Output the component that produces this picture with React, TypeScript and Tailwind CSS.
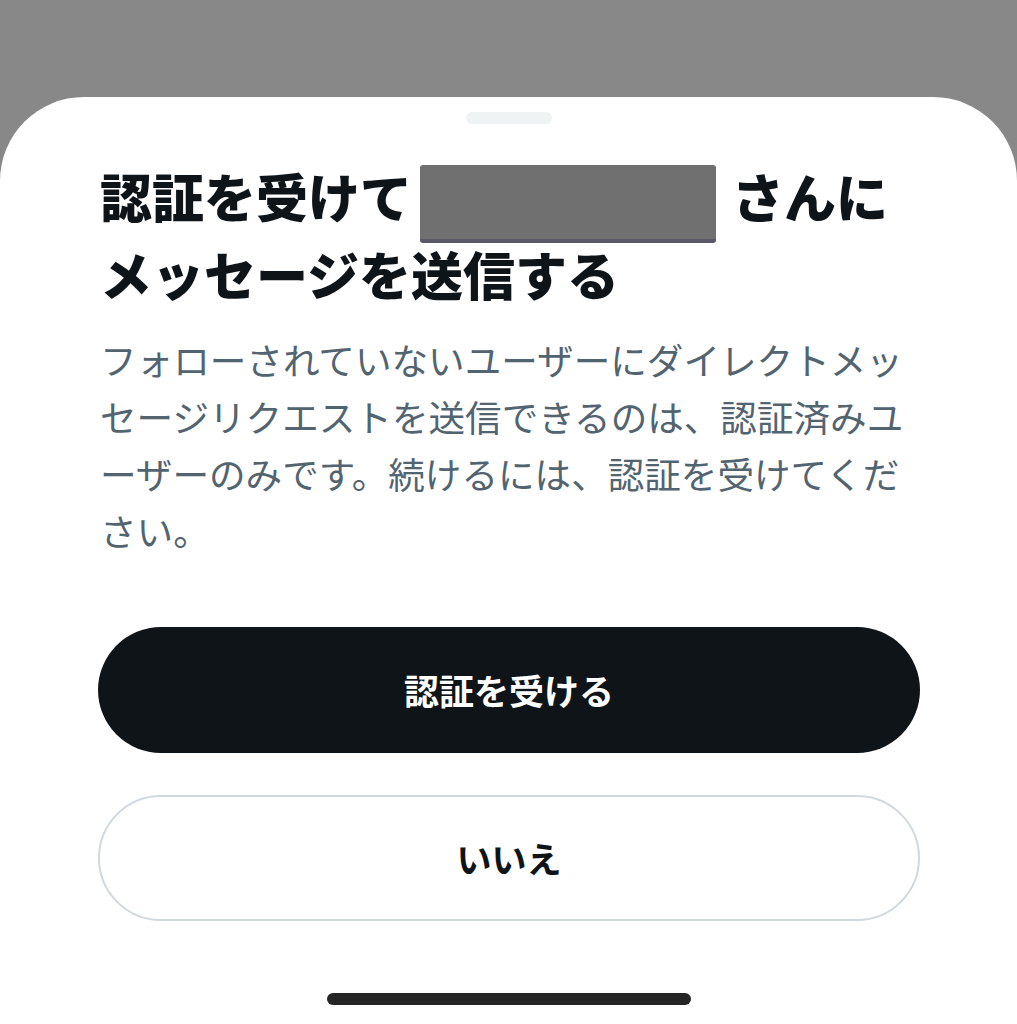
const jp = { fontFamily: '"Noto Sans CJK JP", "Noto Sans", sans-serif' }

export default function App() {
  return (
    <div className="w-[1017px] h-[1024px] bg-[#888888] flex flex-col overflow-hidden" style={jp}>
      <div className="h-[97px] shrink-0" />
      <div className="flex-1 bg-white rounded-t-[84px] flex flex-col">
        {/* grabber */}
        <div className="flex justify-center pt-[15px]">
          <div className="w-[86px] h-[12px] rounded-full bg-[#eff3f4]" />
        </div>

        <div className="pl-[100px] pr-[97px] pt-[33px]">
          <h1 className="text-[52px] leading-[78px] font-black text-[#0f1419] whitespace-nowrap">
            <div className="flex items-center h-[78px]">
              <span>認証を受けて</span>
              <span className="ml-[8px] mr-[16px] mt-[16px] w-[296px] h-[78px] rounded-[3px] bg-[#707070] border-b-[4px] border-[#5a5a66]" />
              <span>さんに</span>
            </div>
            <div className="h-[78px]">メッセージを送信する</div>
          </h1>

          <p className="mt-[18px] text-[36.6px] leading-[57px] text-[#536471] whitespace-nowrap">
            フォローされていないユーザーにダイレクトメッ
            <br />
            セージリクエストを送信できるのは、認証済みユ
            <br />
            ーザーのみです。続けるには、認証を受けてくだ
            <br />
            さい。
          </p>
        </div>

        <div className="pl-[98px] pr-[97px] mt-[68px] flex flex-col gap-[42px]">
          <button className="h-[126px] w-full rounded-full bg-[#0f1419] text-white text-[35px] font-bold">
            認証を受ける
          </button>
          <button className="h-[126px] w-full rounded-full bg-white border-[2px] border-[#cfd9de] text-[#0f1419] text-[35px] font-bold">
            いいえ
          </button>
        </div>

        <div className="flex justify-center mt-[72px]">
          <div className="w-[364px] h-[12px] rounded-full bg-[#252525]" />
        </div>
      </div>
    </div>
  )
}
